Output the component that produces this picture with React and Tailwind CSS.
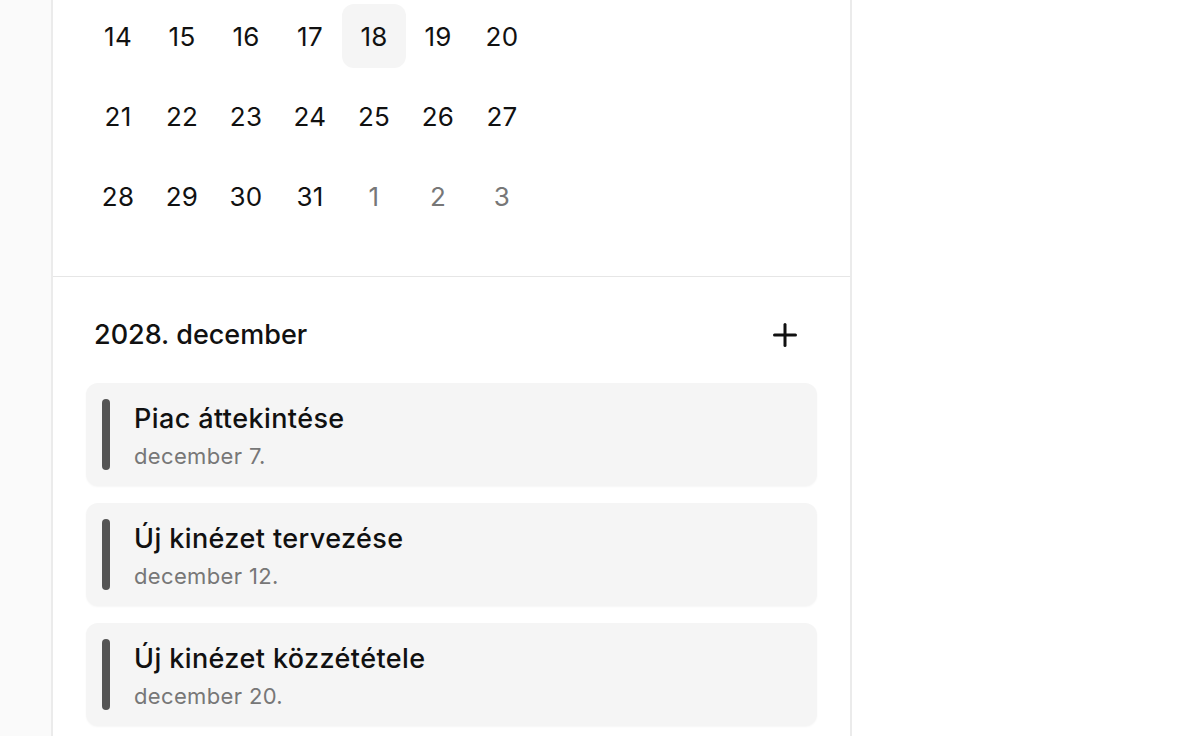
import { Plus } from "lucide-react";

const weeks = [
  [14, 15, 16, 17, 18, 19, 20],
  [21, 22, 23, 24, 25, 26, 27],
  [28, 29, 30, 31, 1, 2, 3],
];

const events = [
  { title: "Piac áttekintése", date: "december 7." },
  { title: "Új kinézet tervezése", date: "december 12." },
  { title: "Új kinézet közzététele", date: "december 20." },
];

function App() {
  return (
    <div
      className="min-h-screen bg-white text-[#111] overflow-hidden flex"
      style={{ fontFamily: "Inter, 'Noto Sans', sans-serif" }}
    >
      <div className="w-[51px] shrink-0 bg-[#fafafa]" />
      <div className="w-[801px] shrink-0 h-[736px] bg-white border-x-2 border-[#ebebeb] overflow-hidden">
        {/* Calendar days */}
        <div className="px-[33px] pt-1 pb-12 border-b border-[#e6e6e6]">
          <div className="grid grid-cols-[repeat(7,64px)] gap-y-4">
            {weeks.map((week, wi) =>
              week.map((d, di) => {
                const muted = wi === 2 && d < 10;
                const selected = d === 18;
                return (
                  <div
                    key={wi + "-" + di}
                    className={
                      "h-16 w-16 flex items-center justify-center text-[26px] tracking-[0.01em] rounded-xl " +
                      (selected ? "bg-[#f5f5f5] " : "") +
                      (muted ? "text-[#777]" : "text-[#111]")
                    }
                  >
                    {d}
                  </div>
                );
              })
            )}
          </div>
        </div>

        {/* Events */}
        <div className="px-[33px] pt-[34px]">
          <div className="h-12 px-2 flex items-center justify-between mb-6">
            <h2 className="text-[27px] font-medium">2028. december</h2>
            <button className="h-12 w-12 flex items-center justify-center">
              <Plus size={36} strokeWidth={2} className="text-[#111]" />
            </button>
          </div>

          <div className="flex flex-col gap-[17px]">
            {events.map((e) => (
              <div
                key={e.title}
                className="h-[103px] bg-[#f5f5f5] rounded-xl px-4 py-4 flex items-stretch gap-6 shadow-[0_1px_2px_rgba(0,0,0,0.04)]"
              >
                <div className="w-2 rounded-full bg-[#555]" />
                <div className="flex flex-col justify-center">
                  <div className="text-[27px] leading-[42px] tracking-[0.015em] font-medium">{e.title}</div>
                  <div className="text-[22px] leading-[32px] tracking-[0.016em] text-[#777]">{e.date}</div>
                </div>
              </div>
            ))}
          </div>
        </div>
      </div>
    </div>
  );
}

export default App;
